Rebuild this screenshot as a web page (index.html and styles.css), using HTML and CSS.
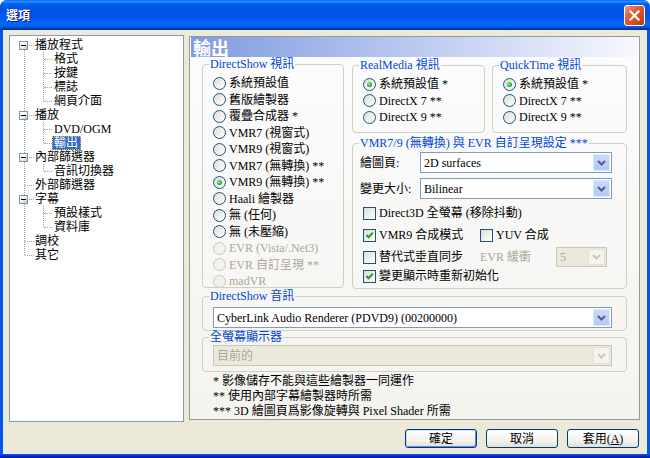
FILE: index.html
```html
<!DOCTYPE html>
<html lang="zh-Hant">
<head>
    <meta charset="UTF-8">
    <title>選項</title>
    <link rel="stylesheet" href="styles.css">
</head>
<body>
<div class="window">
    <div class="titlebar">
        <span class="title">選項</span>
        <span class="close">
            <svg width="19" height="19" viewBox="0 0 19 19"><path d="M5.5 5.5 L13.5 13.5 M13.5 5.5 L5.5 13.5" stroke="#fff" stroke-width="2.2" stroke-linecap="square"/></svg>
        </span>
    </div>

    <div class="client">
        <div class="main">
            <div class="tree">
                <ul class="lvl0">
                    <li>
                        <div class="row"><span class="tog"></span><span class="txt">播放程式</span></div>
                        <ul class="lvl1">
                            <li><div class="row"><span class="txt">格式</span></div></li>
                            <li><div class="row"><span class="txt">按鍵</span></div></li>
                            <li><div class="row"><span class="txt">標誌</span></div></li>
                            <li><div class="row"><span class="txt">網頁介面</span></div></li>
                        </ul>
                    </li>
                    <li>
                        <div class="row"><span class="tog"></span><span class="txt">播放</span></div>
                        <ul class="lvl1">
                            <li><div class="row"><span class="txt">DVD/OGM</span></div></li>
                            <li><div class="row"><span class="txt sel">輸出</span></div></li>
                        </ul>
                    </li>
                    <li>
                        <div class="row"><span class="tog"></span><span class="txt">內部篩選器</span></div>
                        <ul class="lvl1">
                            <li><div class="row"><span class="txt">音訊切換器</span></div></li>
                        </ul>
                    </li>
                    <li><div class="row"><span class="txt">外部篩選器</span></div></li>
                    <li>
                        <div class="row"><span class="tog"></span><span class="txt">字幕</span></div>
                        <ul class="lvl1">
                            <li><div class="row"><span class="txt">預設樣式</span></div></li>
                            <li><div class="row"><span class="txt">資料庫</span></div></li>
                        </ul>
                    </li>
                    <li><div class="row"><span class="txt">調校</span></div></li>
                    <li><div class="row"><span class="txt">其它</span></div></li>
                </ul>
            </div>

            <div class="page">
                <div class="page-head">輸出</div>
                <div class="page-body">
                    <div class="top">
                        <fieldset class="grp ds-video">
                            <legend>DirectShow 視訊</legend>
                            <div class="opt"><span class="radio"></span>系統預設值</div>
                            <div class="opt"><span class="radio"></span>舊版繪製器</div>
                            <div class="opt"><span class="radio"></span>覆疊合成器 *</div>
                            <div class="opt"><span class="radio"></span>VMR7 (視窗式)</div>
                            <div class="opt"><span class="radio"></span>VMR9 (視窗式)</div>
                            <div class="opt"><span class="radio"></span>VMR7 (無轉換) **</div>
                            <div class="opt"><span class="radio on"></span>VMR9 (無轉換) **</div>
                            <div class="opt"><span class="radio"></span>Haali 繪製器</div>
                            <div class="opt"><span class="radio"></span>無 (任何)</div>
                            <div class="opt"><span class="radio"></span>無 (未壓縮)</div>
                            <div class="opt off"><span class="radio"></span>EVR (Vista/.Net3)</div>
                            <div class="opt off"><span class="radio"></span>EVR 自訂呈現 **</div>
                            <div class="opt off"><span class="radio"></span>madVR</div>
                        </fieldset>

                        <div class="right-col">
                            <div class="pair">
                                <fieldset class="grp rm">
                                    <legend>RealMedia 視訊</legend>
                                    <div class="opt"><span class="radio on"></span>系統預設值 *</div>
                                    <div class="opt"><span class="radio"></span>DirectX 7 **</div>
                                    <div class="opt"><span class="radio"></span>DirectX 9 **</div>
                                </fieldset>
                                <fieldset class="grp qt">
                                    <legend>QuickTime 視訊</legend>
                                    <div class="opt"><span class="radio on"></span>系統預設值 *</div>
                                    <div class="opt"><span class="radio"></span>DirectX 7 **</div>
                                    <div class="opt"><span class="radio"></span>DirectX 9 **</div>
                                </fieldset>
                            </div>

                            <fieldset class="grp vmr">
                                <legend>VMR7/9 (無轉換) 與 EVR 自訂呈現設定 ***</legend>
                                <div class="field">
                                    <span class="lbl">繪圖頁:</span>
                                    <div class="combo surf">
                                        <span class="val">2D surfaces</span>
                                        <span class="drop"><svg width="9" height="6" viewBox="0 0 9 6"><path d="M1 1 L4.5 4.5 L8 1" fill="none" stroke="#4D6185" stroke-width="2"/></svg></span>
                                    </div>
                                </div>
                                <div class="field">
                                    <span class="lbl">變更大小:</span>
                                    <div class="combo surf">
                                        <span class="val">Bilinear</span>
                                        <span class="drop"><svg width="9" height="6" viewBox="0 0 9 6"><path d="M1 1 L4.5 4.5 L8 1" fill="none" stroke="#4D6185" stroke-width="2"/></svg></span>
                                    </div>
                                </div>
                                <div class="checks">
                                    <div class="chk-row">
                                        <span class="chk"><span class="box"></span>Direct3D 全螢幕 (移除抖動)</span>
                                    </div>
                                    <div class="chk-row">
                                        <span class="chk first"><span class="box"><svg width="11" height="11" viewBox="0 0 11 11"><path d="M2.5 5 L4.5 7.2 L8.8 2.8" fill="none" stroke="#21A121" stroke-width="2"/></svg></span>VMR9 合成模式</span>
                                        <span class="chk"><span class="box"></span>YUV 合成</span>
                                    </div>
                                    <div class="chk-row tall">
                                        <span class="chk first"><span class="box"></span>替代式垂直同步</span>
                                        <span class="evr-lbl">EVR 緩衝</span>
                                        <div class="combo off tiny">
                                            <span class="val">5</span>
                                            <span class="drop"><svg width="9" height="6" viewBox="0 0 9 6"><path d="M1 1 L4.5 4.5 L8 1" fill="none" stroke="#C9C7BA" stroke-width="2"/></svg></span>
                                        </div>
                                    </div>
                                    <div class="chk-row last">
                                        <span class="chk"><span class="box"><svg width="11" height="11" viewBox="0 0 11 11"><path d="M2.5 5 L4.5 7.2 L8.8 2.8" fill="none" stroke="#21A121" stroke-width="2"/></svg></span>變更顯示時重新初始化</span>
                                    </div>
                                </div>
                            </fieldset>
                        </div>
                    </div>

                    <fieldset class="grp wide audio">
                        <legend>DirectShow 音訊</legend>
                        <div class="combo long">
                            <span class="val">CyberLink Audio Renderer (PDVD9) (00200000)</span>
                            <span class="drop"><svg width="9" height="6" viewBox="0 0 9 6"><path d="M1 1 L4.5 4.5 L8 1" fill="none" stroke="#4D6185" stroke-width="2"/></svg></span>
                        </div>
                    </fieldset>

                    <fieldset class="grp wide screen">
                        <legend>全螢幕顯示器</legend>
                        <div class="combo long off">
                            <span class="val">目前的</span>
                            <span class="drop"><svg width="9" height="6" viewBox="0 0 9 6"><path d="M1 1 L4.5 4.5 L8 1" fill="none" stroke="#C9C7BA" stroke-width="2"/></svg></span>
                        </div>
                    </fieldset>

                    <div class="notes">
                        <div>* 影像儲存不能與這些繪製器一同運作</div>
                        <div>** 使用內部字幕繪製器時所需</div>
                        <div>*** 3D 繪圖頁爲影像旋轉與 Pixel Shader 所需</div>
                    </div>
                </div>
            </div>
        </div>

        <div class="buttons">
            <div class="btn default">確定</div>
            <div class="btn">取消</div>
            <div class="btn">套用(<u>A</u>)</div>
        </div>
    </div>
</div>
</body>
</html>
```

FILE: styles.css
```css
body {
    margin: 0;
    font: 12px/14px "Liberation Serif", "Noto Sans CJK TC", serif;
    color: #000;
    background: #fff;
}

.window {
    width: 650px;
    height: 458px;
    display: flex;
    flex-direction: column;
    border-radius: 7px 7px 0 0;
    overflow: hidden;
    background: linear-gradient(to top, #00138C 0, #0831D9 2px, #0058EE 4px);
}

/* title bar */
.titlebar {
    flex: none;
    height: 30px;
    display: flex;
    align-items: center;
    justify-content: space-between;
    padding: 0 5px 0 5px;
    background: linear-gradient(to bottom, #0058EE 0%, #3593FF 4%, #288EFF 6%, #127DFF 8%, #036FFC 10%, #0262EE 14%, #0057E5 20%, #0054E3 24%, #0055EB 56%, #005BF5 66%, #026AFE 76%, #0062EF 86%, #0052D6 92%, #0040AB 94%, #003092 100%);
}

.title {
    color: #fff;
    font: bold 12px/14px "Noto Sans CJK TC", sans-serif;
    text-shadow: 1px 1px #0F1089;
    padding-left: 1px;
}

.close {
    width: 21px;
    height: 21px;
    box-sizing: border-box;
    border: 1px solid #fff;
    border-radius: 3px;
    background: linear-gradient(135deg, #F29B7E 0%, #E2603B 35%, #D24A22 70%, #B93A12 100%);
    display: flex;
    align-items: center;
    justify-content: center;
}

.client {
    flex: 1;
    margin: 0 3px 4px 3px;
    background: #ECE9D8;
}

.main {
    display: flex;
    gap: 5px;
    padding: 5px 0 0 6px;
}

/* tree */
.tree {
    width: 175px;
    height: 387px;
    box-sizing: border-box;
    border: 1px solid #7F9DB9;
    background: #fff;
    padding-top: 2px;
}

.tree ul {
    list-style: none;
    margin: 0;
    padding: 0;
    position: relative;
}

.row {
    position: relative;
    height: 14px;
    line-height: 14px;
    white-space: nowrap;
}

.lvl0 > li > .row {
    padding-left: 25px;
}

.lvl1 .row {
    padding-left: 44px;
}

.lvl0::before, .lvl1::before {
    content: "";
    position: absolute;
    border-left: 1px dotted #A0A0A0;
}

.lvl0::before {
    left: 14px;
    top: 7px;
    bottom: 7px;
}

.lvl1::before {
    left: 33px;
    top: 0;
    bottom: 7px;
}

.row::before {
    content: "";
    position: absolute;
    top: 7px;
    border-top: 1px dotted #A0A0A0;
}

.lvl0 > li > .row::before {
    left: 15px;
    width: 9px;
}

.lvl1 .row::before {
    left: 34px;
    width: 8px;
}

.tog {
    position: absolute;
    left: 9px;
    top: 3px;
    width: 9px;
    height: 9px;
    box-sizing: border-box;
    border: 1px solid #7898B5;
    background: linear-gradient(135deg, #fff 35%, #C6C2B2);
    z-index: 1;
}

.tog::after {
    content: "";
    position: absolute;
    left: 1px;
    top: 3px;
    width: 5px;
    height: 1px;
    background: #000;
}

.txt {
    display: inline-block;
    height: 14px;
}

.txt.sel {
    background: #316AC5;
    color: #fff;
    padding: 0 3px 0 2px;
    margin-left: -2px;
    outline: 1px dotted #E8C060;
    outline-offset: -1px;
}

/* options page */
.page {
    width: 451px;
    height: 384px;
    box-sizing: border-box;
    margin-top: 1px;
    border: 1px solid #919B9C;
    background: linear-gradient(#FCFCFE, #F4F3EE);
}

.page-head {
    height: 20px;
    margin: 0 1px;
    padding-left: 2px;
    background: linear-gradient(to right, #7F9BE0, #F7F8FE);
    color: #fff;
    font: bold 18px/20px "Noto Sans CJK TC", sans-serif;
}

.page-body {
    padding: 0 12px;
}

.top {
    display: flex;
    gap: 8px;
}

.grp {
    margin: 0;
    padding: 0 6px;
    border: 1px solid #D0D0BF;
    border-radius: 4px;
    box-sizing: border-box;
    min-width: 0;
}

.grp legend {
    padding: 0 1px;
    color: #0046D5;
    line-height: 14px;
}

.ds-video {
    width: 142px;
    height: 231px;
    padding-top: 4px;
}

.opt {
    display: flex;
    align-items: center;
    gap: 3px;
    height: 16.5px;
    margin-left: 4px;
    white-space: nowrap;
}

.opt.off {
    color: #ACA899;
}

.radio {
    flex: none;
    position: relative;
    width: 13px;
    height: 13px;
    box-sizing: border-box;
    border: 1px solid #1C5180;
    border-radius: 50%;
    background: linear-gradient(135deg, #DCDCD7, #FFFFFF);
}

.radio.on::after {
    content: "";
    position: absolute;
    left: 3px;
    top: 3px;
    width: 5px;
    height: 5px;
    border-radius: 50%;
    background: radial-gradient(circle at 40% 40%, #A8F0A5, #1FAA1F 60%, #118811);
}

.opt.off .radio {
    border-color: #CAC8BB;
    background: #F2F1EC;
}

.right-col {
    width: 275px;
    padding-top: 1px;
}

.pair {
    display: flex;
    gap: 7px;
}

.rm, .qt {
    height: 75px;
    padding-top: 4px;
}

.rm {
    width: 133px;
}

.qt {
    width: 135px;
}

.vmr {
    height: 153px;
    margin-top: 3px;
    padding-top: 2px;
}

.field {
    display: flex;
    align-items: center;
}

.field + .field {
    margin-top: 5px;
}

.lbl {
    width: 60px;
    margin-left: 1px;
}

/* combo boxes */
.combo {
    display: flex;
    align-items: center;
    height: 21px;
    box-sizing: border-box;
    border: 1px solid #7F9DB9;
    background: #fff;
    padding: 1px;
    white-space: nowrap;
}

.combo .val {
    flex: 1;
    padding-left: 2px;
}

.combo .drop {
    width: 17px;
    height: 17px;
    border-radius: 2px;
    background: linear-gradient(#CCDBFD, #B1C7F7);
    box-shadow: inset 0 0 0 1px #DCE6FD;
    display: flex;
    align-items: center;
    justify-content: center;
}

.combo.off {
    border-color: #C9C7BA;
    background: #EBE9DA;
    color: #ACA899;
}

.combo.off .drop {
    background: #F4F3EE;
    box-shadow: inset 0 0 0 1px #E3E1D6;
}

.surf {
    width: 192px;
}

.long {
    width: 399px;
    margin-left: 4px;
}

.tiny {
    width: 51px;
    height: 20px;
}

.tiny .drop {
    height: 16px;
}

/* check boxes */
.checks {
    margin: 6px 0 0 4px;
}

.chk-row {
    display: flex;
    align-items: center;
    height: 16px;
    margin-top: 6px;
    white-space: nowrap;
}

.chk-row:first-child {
    margin-top: 0;
}

.chk-row.tall {
    height: 20px;
    margin-top: 4px;
}

.chk-row.last {
    margin-top: 1px;
}

.chk {
    display: flex;
    align-items: center;
    gap: 3px;
}

.chk.first {
    width: 117px;
}

.box {
    flex: none;
    width: 13px;
    height: 13px;
    box-sizing: border-box;
    border: 1px solid #1C5180;
    background: linear-gradient(135deg, #DCDCD7, #FFFFFF);
    display: flex;
}

.evr-lbl {
    width: 76px;
    color: #ACA899;
}

.wide {
    width: 425px;
    height: 42px;
}

.audio {
    padding-top: 4px;
}

.screen {
    margin-top: -1px;
    padding-top: 1px;
}

.notes {
    margin: 2px 0 0 11px;
    line-height: 15px;
}

/* dialog buttons */
.buttons {
    display: flex;
    justify-content: flex-end;
    gap: 9px;
    padding: 7px 8px 0 0;
}

.btn {
    width: 72px;
    height: 19px;
    box-sizing: border-box;
    border: 1px solid #003C74;
    border-radius: 3px;
    background: linear-gradient(#FFFFFF, #F4F3EF 60%, #E2DFD5);
    display: flex;
    align-items: center;
    justify-content: center;
}

.btn.default {
    box-shadow: inset 0 1px 0 #CEE7FF, inset 1px 0 0 #BCD4F6, inset -1px -1px 0 #6982EE;
}
```
